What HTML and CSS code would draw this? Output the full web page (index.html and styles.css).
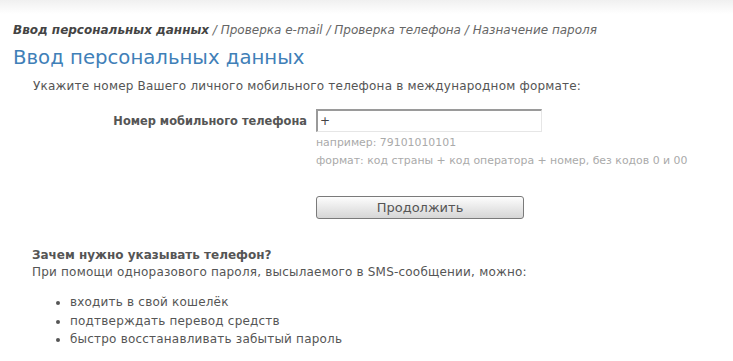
FILE: index.html
```html
<!DOCTYPE html>
<html lang="ru">
<head>
<meta charset="utf-8">
<title>Ввод персональных данных</title>
<link rel="stylesheet" href="styles.css">
</head>
<body>
<div class="page">
  <div class="crumbs"><b>Ввод персональных данных</b> / Проверка e-mail / Проверка телефона / Назначение пароля</div>
  <h1 class="title">Ввод персональных данных</h1>
  <p class="intro">Укажите номер Вашего личного мобильного телефона в международном формате:</p>
  <div class="form-row">
    <label class="label" for="phone">Номер мобильного телефона</label>
    <div class="field">
      <input id="phone" class="input" type="text" value="+">
      <div class="hint hint-first">например: 79101010101</div>
      <div class="hint">формат: код страны + код оператора + номер, без кодов 0 и 00</div>
      <button class="btn" type="button">Продолжить</button>
    </div>
  </div>
  <div class="why">
    <div class="why-title">Зачем нужно указывать телефон?</div>
    <div class="why-text">При помощи одноразового пароля, высылаемого в SMS-сообщении, можно:</div>
    <ul class="list">
      <li>входить в свой кошелёк</li>
      <li>подтверждать перевод средств</li>
      <li>быстро восстанавливать забытый пароль</li>
    </ul>
  </div>
</div>
</body>
</html>
```
FILE: styles.css
```css
html {
  margin: 0;
  padding: 0;
  background: #ffffff linear-gradient(#f0f0f0 0, #ffffff 14px) no-repeat;
  background-size: 100% 14px;
}
body {
  margin: 0;
  padding: 0;
  font-family: "DejaVu Sans", Verdana, sans-serif;
  color: #555;
  font-size: 12px;
}
.page {
  padding: 22px 0 0 13px;
}
.crumbs {
  font-style: italic;
  font-size: 12px;
  color: #666;
  line-height: 16px;
}
.crumbs b {
  color: #444;
}
.title {
  margin: 7px 0 0 0;
  font-weight: normal;
  font-size: 19.7px;
  line-height: 26px;
  color: #3f80b8;
}
.intro {
  margin: 7px 0 0 20px;
  line-height: 16px;
  letter-spacing: 0.2px;
}
.form-row {
  display: flex;
  margin-top: 15px;
}
.label {
  width: 303px;
  padding-top: 5px;
  padding-right: 9px;
  box-sizing: border-box;
  text-align: right;
  font-weight: bold;
  font-size: 11.4px;
}
.field {
  display: flex;
  flex-direction: column;
  align-items: flex-start;
}
.input {
  width: 226px;
  height: 23px;
  box-sizing: border-box;
  border: 1px solid #e6e6e6;
  border-top: 2px solid #9a9a9a;
  border-left: 2px solid #9a9a9a;
  margin: 0;
  padding: 1px 2px;
  font-family: "DejaVu Sans", Verdana, sans-serif;
  font-size: 12px;
  color: #444;
  background: #fff;
}
.hint {
  font-size: 10.9px;
  color: #aaa;
  line-height: 18px;
}
.hint-first {
  margin-top: 2px;
}
.btn {
  margin-top: 26px;
  width: 208px;
  height: 23px;
  border: 1px solid #7a7a7a;
  border-radius: 3px;
  background: linear-gradient(#fdfdfd, #e9e9e9 50%, #d6d6d6);
  font-family: "DejaVu Sans", Verdana, sans-serif;
  font-size: 13px;
  color: #555;
  padding: 0;
}
.why {
  margin: 28px 0 0 19px;
}
.why-title {
  font-weight: bold;
  line-height: 17px;
}
.why-text {
  line-height: 17px;
  letter-spacing: 0.2px;
}
.list {
  margin: 12px 0 0 0;
  padding-left: 38px;
  line-height: 18.5px;
  letter-spacing: 0.2px;
}
```
